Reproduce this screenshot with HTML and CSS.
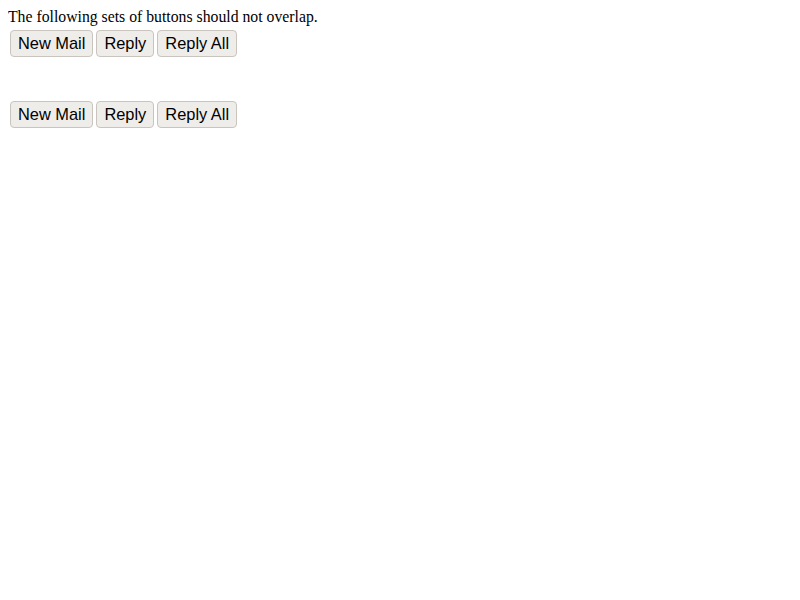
FILE: index.html
```html
<!DOCTYPE html>
<html>
<head>
<meta charset="utf-8">
<link rel="stylesheet" href="styles.css">
</head>
<body>
<div class="intro">The following sets of buttons should not overlap.</div>
<div class="toolbar first">
  <button class="btn">New Mail</button>
  <button class="btn">Reply</button>
  <button class="btn">Reply All</button>
</div>
<div class="toolbar second">
  <button class="btn">New Mail</button>
  <button class="btn">Reply</button>
  <button class="btn">Reply All</button>
</div>
</body>
</html>
```
FILE: styles.css
```css
html, body { background: #ffffff; }
body {
  margin: 8px;
  font-family: "Liberation Serif", serif;
  font-size: 16px;
  color: #000;
}
.intro {
  height: 18px;
  line-height: 18px;
  font-size: 15.75px;
}
.toolbar {
  display: flex;
  gap: 3px;
  padding-left: 2px;
}
.first { margin-top: 4px; }
.second { margin-top: 44px; }
.btn {
  box-sizing: border-box;
  height: 27px;
  padding: 0 7px;
  margin: 0;
  font-family: "Liberation Sans", sans-serif;
  font-size: 16.4px;
  line-height: 25px;
  color: #000;
  background: #efedea;
  border: 1px solid #c9c4be;
  border-radius: 4px;
}
```
